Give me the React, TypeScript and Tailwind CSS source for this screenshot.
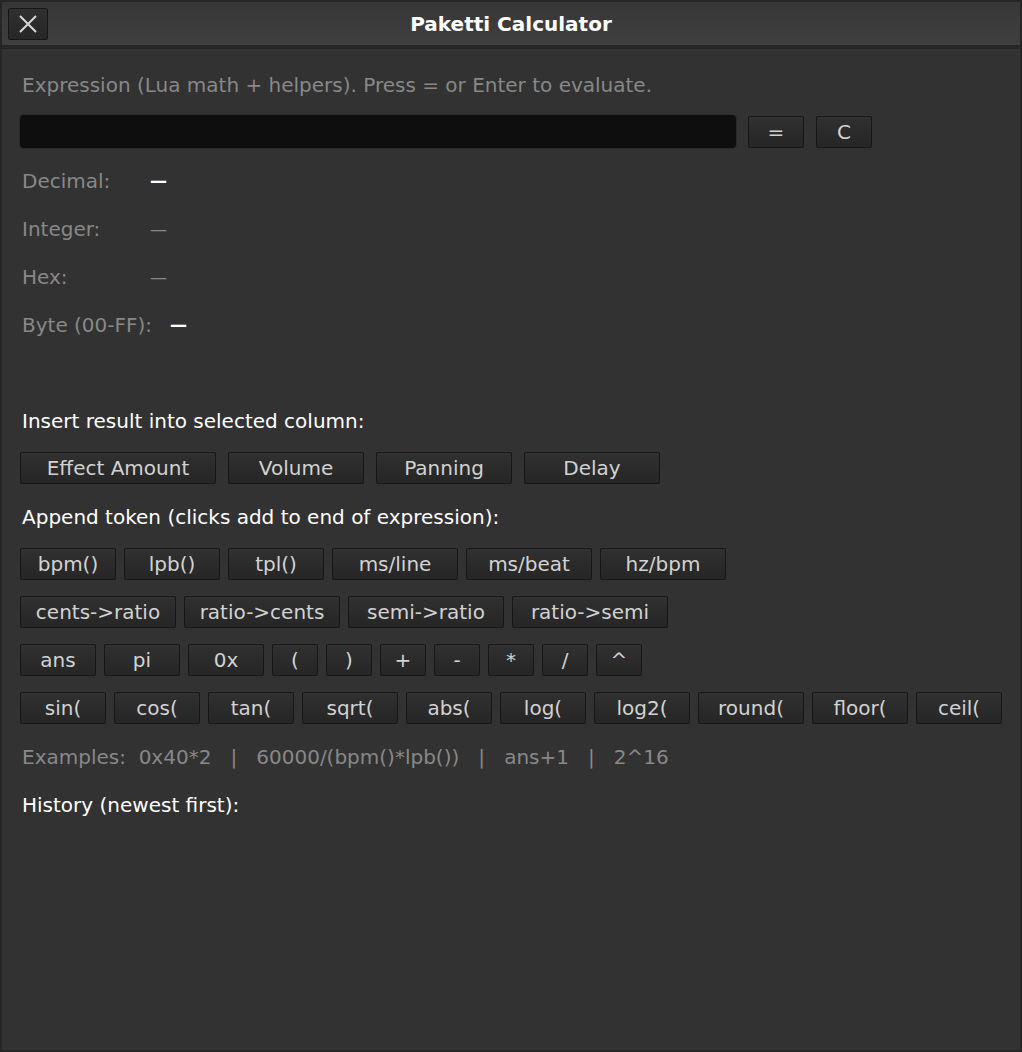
import React from 'react';

const FONT = { fontFamily: '"DejaVu Sans", "Liberation Sans", sans-serif' };

const INSERT = [
  { label: 'Effect Amount', w: 'w-[196px]' },
  { label: 'Volume', w: 'w-[136px]' },
  { label: 'Panning', w: 'w-[136px]' },
  { label: 'Delay', w: 'w-[136px]' },
];

const TOKEN_ROWS = [
  [
    { t: 'bpm()', w: 'w-[96px]' },
    { t: 'lpb()', w: 'w-[96px]' },
    { t: 'tpl()', w: 'w-[96px]' },
    { t: 'ms/line', w: 'w-[126px]' },
    { t: 'ms/beat', w: 'w-[126px]' },
    { t: 'hz/bpm', w: 'w-[126px]' },
  ],
  [
    { t: 'cents->ratio', w: 'w-[156px]' },
    { t: 'ratio->cents', w: 'w-[156px]' },
    { t: 'semi->ratio', w: 'w-[156px]' },
    { t: 'ratio->semi', w: 'w-[156px]' },
  ],
  [
    { t: 'ans', w: 'w-[76px]' },
    { t: 'pi', w: 'w-[76px]' },
    { t: '0x', w: 'w-[76px]' },
    { t: '(', w: 'w-[46px]' },
    { t: ')', w: 'w-[46px]' },
    { t: '+', w: 'w-[46px]' },
    { t: '-', w: 'w-[46px]' },
    { t: '*', w: 'w-[46px]' },
    { t: '/', w: 'w-[46px]' },
    { t: '^', w: 'w-[46px]' },
  ],
  [
    { t: 'sin(', w: 'w-[86px]' },
    { t: 'cos(', w: 'w-[86px]' },
    { t: 'tan(', w: 'w-[86px]' },
    { t: 'sqrt(', w: 'w-[96px]' },
    { t: 'abs(', w: 'w-[86px]' },
    { t: 'log(', w: 'w-[86px]' },
    { t: 'log2(', w: 'w-[96px]' },
    { t: 'round(', w: 'w-[106px]' },
    { t: 'floor(', w: 'w-[96px]' },
    { t: 'ceil(', w: 'w-[86px]' },
  ],
];

const Btn = ({ children, className = '' }: { children: React.ReactNode; className?: string }) => (
  <button
    className={`h-[32px] flex items-center justify-center rounded-[2px] border border-[#171717] bg-gradient-to-b from-[#303030] to-[#262626] text-[#d2d2d2] text-[20px] leading-none ${className}`}
  >
    {children}
  </button>
);

const ResultRow = ({ label, bright, labelW }: { label: string; bright?: boolean; labelW: string }) => (
  <div className="flex items-center h-[24px]">
    <span className={`${labelW} text-[#888888]`}>{label}</span>
    <span className={bright ? 'text-white font-bold text-[17px]' : 'text-[#8a8a8a] text-[17px]'}>—</span>
  </div>
);

export default function App() {
  return (
    <div style={FONT} className="w-[1022px] h-[1052px] bg-[#262626] flex flex-col text-[20px] overflow-hidden">
      {/* title bar */}
      <div className="mt-[2px] h-[43px] mx-[2px] flex items-center relative bg-gradient-to-b from-[#373737] to-[#3f3f3f]">
        <button className="ml-[6px] w-[40px] h-[32px] flex items-center justify-center rounded-[2px] border border-[#171717] bg-gradient-to-b from-[#303030] to-[#262626]">
          <svg width="20" height="20" viewBox="0 0 20 20">
            <path d="M2 2 L18 18 M18 2 L2 18" stroke="#d8d8d8" strokeWidth="2" />
          </svg>
        </button>
        <div className="absolute inset-0 flex items-center justify-center pointer-events-none">
          <span className="text-white font-bold text-[20px]">Paketti Calculator</span>
        </div>
      </div>

      {/* body */}
      <div className="mt-[4px] mx-[2px] mb-[2px] flex-1 bg-[#323232] px-[18px] pt-[24px]">
        <div className="h-[24px] leading-[24px] pl-[2px] text-[#888888]">
          Expression (Lua math + helpers). Press = or Enter to evaluate.
        </div>

        <div className="mt-[18px] flex items-center">
          <div className="w-[716px] h-[33px] rounded-[4px] bg-[#0e0e0e] shadow-[0_0_0_1px_#2a2a2a]" />
          <Btn className="ml-[12px] w-[56px]">=</Btn>
          <Btn className="ml-[12px] w-[56px]">C</Btn>
        </div>

        <div className="mt-[21px] pl-[2px] flex flex-col gap-[24px] leading-[24px]">
          <ResultRow label="Decimal:" bright labelW="w-[128px]" />
          <ResultRow label="Integer:" labelW="w-[128px]" />
          <ResultRow label="Hex:" labelW="w-[128px]" />
          <ResultRow label="Byte (00-FF):" bright labelW="w-[148px]" />
        </div>

        <div className="mt-[72px] pl-[2px] h-[24px] leading-[24px] text-white">Insert result into selected column:</div>
        <div className="mt-[19px] flex gap-[12px]">
          {INSERT.map((b) => (
            <Btn key={b.label} className={b.w}>
              {b.label}
            </Btn>
          ))}
        </div>

        <div className="mt-[21px] pl-[2px] h-[24px] leading-[24px] text-white">
          Append token (clicks add to end of expression):
        </div>
        <div className="mt-[19px] flex flex-col gap-[16px]">
          {TOKEN_ROWS.map((row, i) => (
            <div key={i} className="flex gap-[8px]">
              {row.map((b) => (
                <Btn key={b.t} className={b.w}>
                  {b.t}
                </Btn>
              ))}
            </div>
          ))}
        </div>

        <div className="mt-[21px] pl-[2px] h-[24px] leading-[24px] text-[#888888] whitespace-pre">
          {'Examples:  0x40*2   |   60000/(bpm()*lpb())   |   ans+1   |   2^16'}
        </div>
        <div className="mt-[24px] pl-[2px] h-[24px] leading-[24px] text-white">History (newest first):</div>
      </div>
    </div>
  );
}
